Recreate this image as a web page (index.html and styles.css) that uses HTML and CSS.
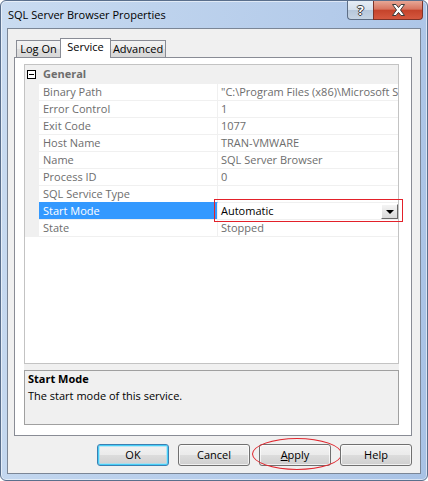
FILE: index.html
```html
<!DOCTYPE html>
<html lang="en">
<head>
    <link rel="stylesheet" href="styles.css">
    <meta charset="UTF-8">
    <title>SQL Server Browser Properties</title>
</head>
<body>
<div class="window">
    <div class="titlebar">
        <div class="title">SQL Server Browser Properties</div>
        <div class="caption-buttons">
            <div class="cap-btn cap-help">?</div>
            <div class="cap-btn cap-close">
                <svg width="15" height="12" viewBox="0 0 15 12">
                    <path d="M1.5 0.5 H5 L7.5 3.6 L10 0.5 H13.5 L9.5 6 L13.5 11.5 H10 L7.5 8.4 L5 11.5 H1.5 L5.5 6 Z"
                          fill="#fff" stroke="#3b3b3b" stroke-width="1" stroke-linejoin="round"/>
                </svg>
            </div>
        </div>
    </div>

    <div class="client">
        <div class="tabs">
            <div class="tab tab-logon">Log On</div>
            <div class="tab tab-service active">Service</div>
            <div class="tab tab-advanced">Advanced</div>
        </div>

        <div class="panel">
            <div class="propgrid">
                <div class="grid">
                    <div class="cat-row">
                        <div class="margin"><span class="toggle"></span></div>
                        <div class="cat-label">General</div>
                    </div>
                    <div class="row">
                        <div class="margin"></div>
                        <div class="name">Binary Path</div>
                        <div class="value">"C:\Program Files (x86)\Microsoft SQL Server\90\Shared\sqlbrowser.exe"</div>
                    </div>
                    <div class="row">
                        <div class="margin"></div>
                        <div class="name">Error Control</div>
                        <div class="value">1</div>
                    </div>
                    <div class="row">
                        <div class="margin"></div>
                        <div class="name">Exit Code</div>
                        <div class="value">1077</div>
                    </div>
                    <div class="row">
                        <div class="margin"></div>
                        <div class="name">Host Name</div>
                        <div class="value">TRAN-VMWARE</div>
                    </div>
                    <div class="row">
                        <div class="margin"></div>
                        <div class="name">Name</div>
                        <div class="value">SQL Server Browser</div>
                    </div>
                    <div class="row">
                        <div class="margin"></div>
                        <div class="name">Process ID</div>
                        <div class="value">0</div>
                    </div>
                    <div class="row">
                        <div class="margin"></div>
                        <div class="name">SQL Service Type</div>
                        <div class="value"></div>
                    </div>
                    <div class="row selected">
                        <div class="margin"></div>
                        <div class="name">Start Mode</div>
                        <div class="value editing">
                            <span class="edit-text">Automatic</span>
                            <span class="drop-btn"><span class="arrow"></span></span>
                            <span class="callout-box"></span>
                        </div>
                    </div>
                    <div class="row last">
                        <div class="margin"></div>
                        <div class="name">State</div>
                        <div class="value">Stopped</div>
                    </div>
                </div>

                <div class="help">
                    <div class="help-title">Start Mode</div>
                    <div class="help-text">The start mode of this service.</div>
                </div>
            </div>
        </div>

        <div class="buttons">
            <div class="btn default">OK</div>
            <div class="btn">Cancel</div>
            <div class="btn apply"><span class="accel">A</span>pply<span class="callout-ellipse"></span></div>
            <div class="btn">Help</div>
        </div>
    </div>
</div>
</body>
</html>
```
FILE: styles.css
```css
* {
    box-sizing: border-box;
}

body {
    margin: 0;
    font-family: "Open Sans", sans-serif;
    font-size: 11px;
    color: #000;
}

/* window frame */
.window {
    width: 428px;
    height: 481px;
    display: flex;
    flex-direction: column;
    padding: 0 6px 6px 6px;
    border: 1px solid #5a6f8c;
    border-radius: 6px;
    background: linear-gradient(100deg, #cadcf1 0%, #bed3ed 30%, #b4cbea 65%, #a8c2e5 100%);
    box-shadow: inset 0 0 0 1px rgba(255, 255, 255, 0.55);
    overflow: hidden;
}

.titlebar {
    height: 27px;
    display: flex;
    justify-content: space-between;
    align-items: flex-start;
}

.title {
    padding: 6px 0 0 1px;
    line-height: 16px;
    color: #000;
}

.caption-buttons {
    display: flex;
    margin-right: -2px;
}

.cap-btn {
    height: 19px;
    display: flex;
    align-items: center;
    justify-content: center;
    border: 1px solid #5d6e85;
    border-top: 0;
}

.cap-help {
    width: 26px;
    border-right: 0;
    border-radius: 0 0 0 4px;
    background: linear-gradient(#e6edf5 0%, #d5e0ec 48%, #b6c7db 52%, #c6d4e4 100%);
    color: #fff;
    font-weight: 700;
    font-size: 13px;
    text-shadow: 1px 0 #3b3b3b, -1px 0 #3b3b3b, 0 1px #3b3b3b, 0 -1px #3b3b3b;
}

.cap-close {
    width: 50px;
    border-color: #7e3328;
    border-radius: 0 0 4px 0;
    background: linear-gradient(#e7a796 0%, #d87560 45%, #c5432b 52%, #d5583f 100%);
}

/* client area */
.client {
    flex: 1;
    display: flex;
    flex-direction: column;
    padding: 9px 8px 0 6px;
    border: 1px solid #7b8696;
    background: #f0f0f0;
}

.tabs {
    height: 20px;
    display: flex;
    align-items: flex-end;
    padding-left: 2px;
    margin-bottom: -1px;
    position: relative;
    z-index: 1;
}

.tab {
    height: 17px;
    margin-bottom: 1px;
    margin-left: -1px;
    border: 1px solid #898c95;
    border-bottom: 0;
    background: linear-gradient(#f3f3f3, #ebebeb 50%, #dedede 50%, #d8d8d8);
    text-align: center;
    line-height: 15px;
}

.tab-logon {
    width: 45px;
    margin-left: 0;
}

.tab-service {
    width: 51px;
}

.tab-advanced {
    width: 56px;
}

.tab.active {
    height: 20px;
    margin-bottom: 0;
    background: #fff;
    position: relative;
    z-index: 1;
}

.panel {
    height: 379px;
    padding: 6px 12px 0 9px;
    border: 1px solid #898c95;
    background: #fff;
}

/* property grid */
.propgrid {
    height: 361px;
    display: flex;
    flex-direction: column;
    background: #f0f0f0;
}

.grid {
    height: 300px;
    border: 1px solid #c3c3c3;
    background: #fff;
}

.cat-row {
    height: 18px;
    display: flex;
    background: #f0f0f0;
}

.margin {
    width: 14px;
    flex: none;
    background: #f0f0f0;
}

.cat-row .margin {
    display: flex;
    align-items: center;
    padding-left: 2px;
}

.toggle {
    width: 9px;
    height: 9px;
    border: 1px solid #000;
    background: #fff;
    position: relative;
}

.toggle::after {
    content: "";
    position: absolute;
    left: 1px;
    top: 3px;
    width: 5px;
    height: 1px;
    background: #000;
}

.cat-label {
    padding-left: 4px;
    line-height: 18px;
    font-weight: 700;
    color: #6d6d6d;
}

.row {
    height: 17px;
    display: flex;
}

.row.last {
    height: 18px;
}

.name, .value {
    border-top: 1px solid #f0f0f0;
    padding-bottom: 1px;
    line-height: 15px;
    white-space: nowrap;
    overflow: hidden;
    color: #6d6d6d;
}

.row.last .name, .row.last .value {
    border-bottom: 1px solid #f0f0f0;
}

.name {
    width: 179px;
    flex: none;
    padding-left: 4px;
    border-right: 1px solid #f0f0f0;
}

.value {
    flex: 1;
    padding-left: 3px;
}

.row.selected .name {
    background: #3399ff;
    border-top-color: #3399ff;
    color: #fff;
}

.value.editing {
    display: flex;
    justify-content: space-between;
    align-items: flex-end;
    padding-bottom: 0;
    overflow: visible;
    position: relative;
    color: #000;
}

.edit-text {
    align-self: flex-start;
}

.drop-btn {
    width: 17px;
    height: 15px;
    display: flex;
    align-items: center;
    justify-content: center;
    border: 1px solid;
    border-color: #fff #696969 #696969 #fff;
    background: linear-gradient(#f4f4f4, #d9d9d9);
}

.arrow {
    width: 0;
    height: 0;
    border-left: 4px solid transparent;
    border-right: 4px solid transparent;
    border-top: 4px solid #000;
    margin-top: 1px;
}

.callout-box {
    position: absolute;
    top: -4px;
    bottom: -3px;
    left: -4px;
    right: -5px;
    border: 1px solid #e3212a;
}

.help {
    height: 55px;
    margin-top: 6px;
    padding: 0 3px;
    border: 1px solid #a0a0a0;
    line-height: 15px;
}

.help-title {
    font-weight: 700;
}

.help-text {
    margin-top: 2px;
}

/* dialog buttons */
.buttons {
    display: flex;
    justify-content: flex-end;
    gap: 9px;
    margin-top: 8px;
}

.btn {
    width: 72px;
    height: 22px;
    border: 1px solid #707070;
    border-radius: 3px;
    background: linear-gradient(#f2f2f2, #ebebeb 50%, #dddddd 50%, #cfcfcf);
    box-shadow: inset 0 0 0 1px rgba(255, 255, 255, 0.7);
    text-align: center;
    line-height: 20px;
    position: relative;
}

.btn.default {
    border-color: #3c7fb1;
    box-shadow: inset 0 0 0 1px #48cff8, inset 0 0 0 2px rgba(150, 225, 250, 0.6);
}

.accel {
    text-decoration: underline;
}

.callout-ellipse {
    position: absolute;
    left: -8px;
    right: -12px;
    top: -7px;
    bottom: -5px;
    border: 1px solid #e0262e;
    border-radius: 50%;
}
```
